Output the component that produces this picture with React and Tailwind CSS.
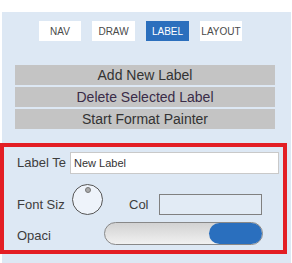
export default function App() {
  const font = { fontFamily: '"Liberation Sans", Arial, sans-serif' };
  return (
    <div className="w-[292px] h-[263px] bg-white pt-[12px] pl-[2px] overflow-hidden" style={font}>
      <div className="w-[289px] h-[251px] bg-[#dde8f4] flex flex-col">
        <div className="flex gap-[11px] pl-[37px] mt-[9px]">
          <div className="w-[42px] h-[20px] bg-white flex items-center justify-center text-[10px] text-[#4a4a4a]">NAV</div>
          <div className="w-[43px] h-[20px] bg-white flex items-center justify-center text-[10px] text-[#4a4a4a]">DRAW</div>
          <div className="w-[43px] h-[20px] bg-[#2b6fbd] flex items-center justify-center text-[10px] text-white">LABEL</div>
          <div className="w-[42px] h-[20px] bg-white flex items-center justify-center text-[10px] text-[#4a4a4a]">LAYOUT</div>
        </div>
        <div className="flex flex-col gap-[2px] ml-[13px] mt-[24px] w-[260px]">
          <div className="h-[20px] bg-[#c4c4c4] flex items-center justify-center text-[14px] text-[#333]">Add New Label</div>
          <div className="h-[20px] bg-[#c4c4c4] flex items-center justify-center text-[14px] text-[#3a2c48]">Delete Selected Label</div>
          <div className="h-[20px] bg-[#c4c4c4] flex items-center justify-center text-[14px] text-[#333]">Start Format Painter</div>
        </div>
        <div className="-ml-[2px] mt-[14px] w-[287px] h-[111px] border-4 border-[#e31e24] flex flex-col">
          <div className="flex items-center mt-[5px] h-[22px]">
            <span className="ml-[13px] w-[53px] text-[13px] text-[#3d3d3d] whitespace-nowrap overflow-hidden">Label Te</span>
            <div className="w-[209px] h-[22px] bg-white border border-[#c9c9c9] flex items-center pl-[3px] text-[11px] text-[#333]">New Label</div>
          </div>
          <div className="flex items-end mt-[10px] h-[31px]">
            <span className="ml-[13px] w-[55px] text-[13px] text-[#3d3d3d] leading-[16px] mb-[2px] whitespace-nowrap">Font Siz</span>
            <div className="relative w-[31px] h-[31px] rounded-full border-[1.5px] border-[#555] bg-[#eef3fa]">
              <div className="absolute left-1/2 -translate-x-1/2 top-[2px] w-[6px] h-[6px] rounded-full bg-[#aaa] border border-[#777]"></div>
            </div>
            <span className="ml-[26px] w-[30px] text-[13px] text-[#3d3d3d] leading-[16px] mb-[2px]">Col</span>
            <div className="w-[103px] h-[21px] border border-[#808080] bg-[#e2ebf5]"></div>
          </div>
          <div className="flex items-center mt-[7px] h-[23px]">
            <span className="ml-[13px] w-[87px] text-[13px] text-[#3d3d3d] leading-[16px] mt-[5px]">Opaci</span>
            <div className="w-[159px] h-[23px] rounded-full border border-[#888] bg-linear-to-b from-[#d2d2d2] to-[#f1f1f1] flex justify-end">
              <div className="w-[53px] h-full rounded-full bg-[#2a6fbe]"></div>
            </div>
          </div>
        </div>
      </div>
    </div>
  );
}
